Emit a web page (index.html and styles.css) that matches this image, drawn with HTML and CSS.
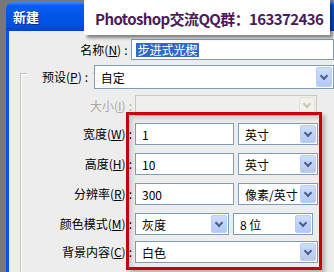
FILE: index.html
```html
<!DOCTYPE html>
<html lang="zh-CN">
<head>
    <meta charset="UTF-8">
    <title>新建</title>
    <link rel="stylesheet" href="styles.css">
</head>
<body>
    <div class="screen">
        <div class="window">
            <div class="titlebar"><span class="title">新建</span></div>
            <div class="client">
                <div class="row row-name">
                    <label class="lbl lbl-wide">名称(<u>N</u>)<span class="colon">:</span></label>
                    <div class="field name-field"><span class="picked">步进式光楔</span></div>
                </div>

                <div class="group">
                    <div class="row row-preset">
                        <label class="legend">预设(<u>P</u>)<span class="colon">:</span></label>
                        <div class="select preset-select"><span class="val">自定</span><span class="arrow"></span></div>
                    </div>
                    <div class="row row-size">
                        <label class="lbl off">大小(<u>I</u>)<span class="colon">:</span></label>
                        <div class="select size-select off"><span class="val"></span><span class="arrow"></span></div>
                    </div>
                    <div class="row">
                        <label class="lbl">宽度(<u>W</u>)<span class="colon">:</span></label>
                        <div class="field num-field"><span class="val">1</span></div>
                        <div class="select unit-select"><span class="val">英寸</span><span class="arrow"></span></div>
                    </div>
                    <div class="row">
                        <label class="lbl">高度(<u>H</u>)<span class="colon">:</span></label>
                        <div class="field num-field"><span class="val">10</span></div>
                        <div class="select unit-select"><span class="val">英寸</span><span class="arrow"></span></div>
                    </div>
                    <div class="row">
                        <label class="lbl">分辨率(<u>R</u>)<span class="colon">:</span></label>
                        <div class="field num-field"><span class="val">300</span></div>
                        <div class="select unit-select"><span class="val">像素/英寸</span><span class="arrow"></span></div>
                    </div>
                    <div class="row">
                        <label class="lbl">颜色模式(<u>M</u>)<span class="colon">:</span></label>
                        <div class="select mode-select"><span class="val">灰度</span><span class="arrow"></span></div>
                        <div class="select unit-select"><span class="val">8 位</span><span class="arrow"></span></div>
                    </div>
                    <div class="row row-last">
                        <label class="lbl">背景内容(<u>C</u>)<span class="colon">:</span></label>
                        <div class="select bg-select"><span class="val">白色</span><span class="arrow"></span></div>
                    </div>
                </div>
            </div>
        </div>

        <!-- annotation drawn over the screenshot -->
        <div class="mark-frame"></div>
        <div class="qq-banner">Photoshop交流QQ群：163372436</div>
    </div>
</body>
</html>
```

FILE: styles.css
```css
body {
    margin: 0;
    font-family: "Noto Sans CJK SC", "Noto Sans", sans-serif;
    font-size: 12px;
    color: #000;
}
.screen {
    position: relative;
    width: 334px;
    height: 272px;
    overflow: hidden;
    background: #787878;
}
.window {
    margin: 2px 0 0 6px;
    height: 270px;
    border-top-left-radius: 7px;
    overflow: hidden;
}
.titlebar {
    height: 29px;
    background: linear-gradient(#3a8cff 0%, #0a5ff0 12%, #0055e8 45%, #0050e0 80%, #0043d0 100%);
    display: flex;
    align-items: center;
}
.title {
    margin-left: 7px;
    color: #fff;
    font-size: 13px;
    font-weight: bold;
    text-shadow: 1px 1px 0 #0a2a8c;
}
.client {
    height: 241px;
    border-left: 3px solid #0a52e8;
    background: #ededed;
    overflow: hidden;
}
.row {
    display: flex;
    align-items: stretch;
    height: 22px;
    margin-top: 8px;
}
.row-name {
    height: 21px;
    margin-top: 8px;
}
.lbl {
    width: 111px;
    margin-right: 3px;
    text-align: right;
    line-height: 22px;
    white-space: nowrap;
}
.lbl-wide {
    width: 123px;
    margin-right: 4px;
}
.colon {
    margin-left: 3px;
}
.lbl.off {
    color: #aca899;
}
.group {
    margin: 13px 0 0 11px;
    border-top: 1px solid #c5c2b2;
    border-left: 1px solid #c5c2b2;
    box-shadow: inset 1px 1px 0 #fff;
    height: 200px;
}
.row-preset {
    margin-top: -9px;
    height: 24px;
    padding-left: 6px;
}
.legend {
    width: 50px;
    padding-left: 15px;
    background: #ededed;
    line-height: 24px;
    white-space: nowrap;
}
.row-size {
    margin-top: 6px;
    height: 21px;
}
.row-size + .row {
    margin-top: 7px;
}
.row-last {
    margin-top: 6px;
}
.field,
.select {
    box-sizing: border-box;
    display: flex;
    align-items: center;
    border: 1px solid #7f9db9;
    background: #fff;
    white-space: nowrap;
    overflow: hidden;
}
.val {
    flex: 1;
    padding-left: 6px;
}
.name-field {
    width: 210px;
    padding-left: 4px;
}
.picked {
    background: #316ac5;
    color: #fff;
    line-height: 14px;
    padding: 0 1px;
}
.preset-select {
    width: 241px;
    margin-left: 2px;
}
.size-select {
    width: 182px;
}
.select.off {
    border-color: #c9c7ba;
    background: #efefef;
}
.num-field {
    width: 99px;
}
.unit-select {
    width: 80px;
    margin-left: 4px;
}
.mode-select {
    width: 94px;
}
.bg-select {
    width: 183px;
}
.arrow {
    box-sizing: border-box;
    width: 16px;
    align-self: stretch;
    margin: 1px;
    border: 1px solid #bccdf5;
    border-radius: 2px;
    background: linear-gradient(#cfdcfd, #b3c8f7);
    display: flex;
    align-items: center;
    justify-content: center;
}
.arrow::after {
    content: "";
    width: 4px;
    height: 4px;
    margin-top: -3px;
    border-right: 2px solid #4d6185;
    border-bottom: 2px solid #4d6185;
    transform: rotate(45deg);
}
.off .arrow {
    border-color: #e2e1d8;
    background: #f2f1ea;
}
.off .arrow::after {
    border-color: #c9c7ba;
}
.mark-frame {
    position: absolute;
    left: 126px;
    top: 112px;
    width: 196px;
    height: 158px;
    box-sizing: border-box;
    border: 3px solid #c8000c;
    box-shadow: 3px 3px 4px rgba(0, 0, 0, 0.25), inset 3px 3px 5px rgba(0, 0, 0, 0.15);
}
.qq-banner {
    position: absolute;
    left: 84px;
    top: 0;
    width: 246px;
    height: 35px;
    box-sizing: border-box;
    padding: 3px 0 0 11px;
    background: #fff;
    box-shadow: 3px 3px 3px rgba(0, 0, 0, 0.45);
    color: #4a1a5a;
    font-size: 15px;
    font-weight: bold;
    letter-spacing: -0.6px;
    line-height: 32px;
    white-space: nowrap;
}
```
